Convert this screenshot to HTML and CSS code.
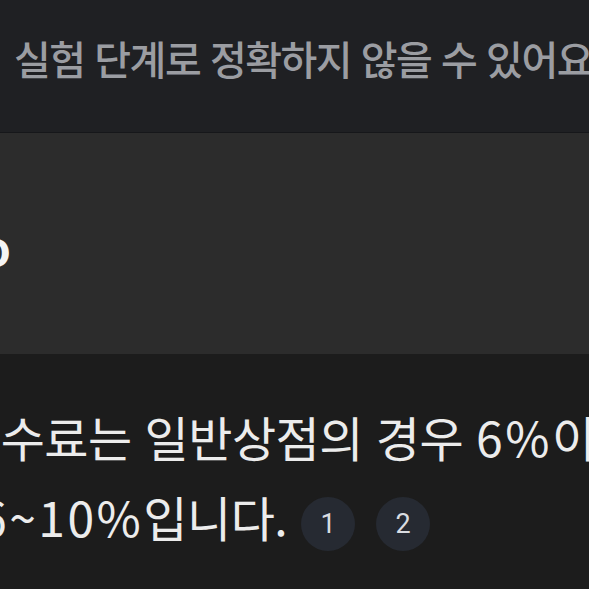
FILE: index.html
```html
<!DOCTYPE html>
<html lang="ko">
<head>
<meta charset="utf-8">
<link rel="stylesheet" href="styles.css">
</head>
<body>
<div class="screen">
  <div class="notice">
    <p class="notice-text">실험 단계로 정확하지 않을 수 있어요</p>
  </div>
  <div class="panel">
    <div class="panel-line"><span class="panel-glyph">o</span></div>
  </div>
  <div class="answer">
    <div class="line line-1">수수료는 일반상점의 경우 <span class="num">6%</span>이</div>
    <div class="line line-2"><span class="num">6~10%</span>입니다.<span class="cites"><span class="cite">1</span><span class="cite">2</span></span></div>
  </div>
</div>
</body>
</html>
```

FILE: styles.css
```css
html, body {
  margin: 0;
  padding: 0;
  background: #1c1c1c;
}

.screen {
  width: 589px;
  height: 589px;
  overflow: hidden;
  display: flex;
  flex-direction: column;
  font-family: "Noto Sans CJK KR", "Noto Sans", sans-serif;
}

.notice {
  height: 133px;
  box-sizing: border-box;
  padding-top: 32px;
  padding-left: 14px;
  background: #1f2023;
  border-bottom: 1px solid #16171a;
  flex: none;
  overflow: hidden;
}

.notice-text {
  margin: 0;
  font-size: 40px;
  line-height: 52px;
  letter-spacing: -1.5px;
  font-weight: 500;
  color: #9b9da2;
  white-space: nowrap;
}

.panel {
  height: 221px;
  box-sizing: border-box;
  padding-top: 90px;
  background: #2c2c2c;
  flex: none;
  overflow: hidden;
}

.panel-line {
  font-size: 46px;
  line-height: 46px;
  font-weight: 700;
  color: #f4f4f4;
  white-space: nowrap;
}

.panel-glyph {
  display: inline-block;
  margin-left: -18px;
}

.answer {
  flex: 1;
  padding-top: 42px;
  background: #1c1c1c;
  overflow: hidden;
}

.line {
  font-size: 48px;
  line-height: 80px;
  letter-spacing: -0.5px;
  font-weight: 400;
  color: #ececec;
  white-space: nowrap;
}

.num {
  letter-spacing: 2.5px;
}

.line-1 {
  margin-left: -43px;
}

.line-2 {
  margin-left: -20px;
}

.cites {
  display: inline-flex;
  gap: 21px;
  margin-left: 14px;
  vertical-align: middle;
  letter-spacing: 0;
}

.cite {
  width: 54px;
  height: 54px;
  border-radius: 50%;
  background: #262a32;
  color: #d9dce1;
  font-family: Roboto, "Noto Sans", sans-serif;
  font-size: 27px;
  line-height: 54px;
  text-align: center;
}
```
